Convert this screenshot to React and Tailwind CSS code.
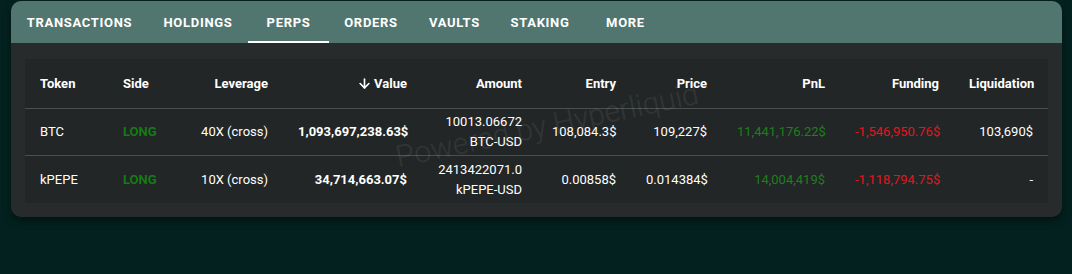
import React from 'react';
import { ArrowDown } from 'lucide-react';

const tabs = [
    { label: 'TRANSACTIONS', w: 'w-[137px]' },
    { label: 'HOLDINGS', w: 'w-[100px]' },
    { label: 'PERPS', w: 'w-[81px]', active: true },
    { label: 'ORDERS', w: 'w-[84px]' },
    { label: 'VAULTS', w: 'w-[83px]' },
    { label: 'STAKING', w: 'w-[88px]' },
    { label: 'MORE', w: 'w-[83px]' },
];

const rows = [
    {
        token: 'BTC', side: 'LONG', leverage: '40X (cross)', value: '1,093,697,238.63$',
        amount: '10013.06672', pair: 'BTC-USD', entry: '108,084.3$', price: '109,227$',
        pnl: '11,441,176.22$', funding: '-1,546,950.76$', liq: '103,690$',
    },
    {
        token: 'kPEPE', side: 'LONG', leverage: '10X (cross)', value: '34,714,663.07$',
        amount: '2413422071.0', pair: 'kPEPE-USD', entry: '0.00858$', price: '0.014384$',
        pnl: '14,004,419$', funding: '-1,118,794.75$', liq: '-',
    },
];

// colonnes: largeurs mesurées sur la capture
const cols = 'grid grid-cols-[83px_75px_100px_139px_115px_94px_91px_118px_114px_94px]';

export default function App() {
    return (
        <div className="min-h-[274px] bg-[#03221f] pt-[1px] px-[11px] font-['Roboto','Liberation_Sans',sans-serif] text-[13px]">
            <div className="w-[1051px] rounded-[10px] bg-[#272b2b] overflow-hidden shadow-[0_4px_10px_rgba(0,0,0,0.45)]">

                {/* barre d'onglets */}
                <div className="flex h-[42px] bg-[#50766f]">
                    {tabs.map((t) => (
                        <div key={t.label} className={`${t.w} relative flex items-center justify-center pt-[1px] text-white font-bold tracking-[0.7px]`}>
                            {t.label}
                            {t.active && <div className="absolute bottom-0 left-0 right-0 h-[2px] bg-white" />}
                        </div>
                    ))}
                </div>

                {/* tableau des positions */}
                <div className="px-[14px] pt-[16px] pb-[14px]">
                    <div className="relative bg-[#222626] text-white whitespace-nowrap">
                        <div className={`${cols} h-[50px] items-center border-b border-[#4a4f4f] font-bold`}>
                            <div className="px-[15px]">Token</div>
                            <div className="px-[15px]">Side</div>
                            <div className="px-[15px] text-right">Leverage</div>
                            <div className="px-[15px] flex items-center justify-end gap-[2px]">
                                <ArrowDown size={15} strokeWidth={2.6} />
                                <span>Value</span>
                            </div>
                            <div className="px-[15px] text-right">Amount</div>
                            <div className="px-[15px] text-right">Entry</div>
                            <div className="px-[15px] text-right">Price</div>
                            <div className="px-[15px] text-right">PnL</div>
                            <div className="px-[15px] text-right">Funding</div>
                            <div className="px-[15px] text-right">Liquidation</div>
                        </div>

                        {rows.map((r, i) => (
                            <div key={r.token} className={`${cols} h-[47px] items-center ${i === 0 ? 'border-b border-[#4a4f4f]' : ''}`}>
                                <div className="px-[15px]">{r.token}</div>
                                <div className="px-[15px] font-bold text-[#157a15]">{r.side}</div>
                                <div className="px-[15px] text-right">{r.leverage}</div>
                                <div className="px-[15px] text-right font-bold">{r.value}</div>
                                <div className="px-[15px] text-right leading-[20px]">
                                    <div>{r.amount}</div>
                                    <div>{r.pair}</div>
                                </div>
                                <div className="px-[15px] text-right">{r.entry}</div>
                                <div className="px-[15px] text-right">{r.price}</div>
                                <div className="px-[15px] text-right text-[#1e7f1e]">{r.pnl}</div>
                                <div className="px-[15px] text-right text-[#e0161e]">{r.funding}</div>
                                <div className="px-[15px] text-right">{r.liq}</div>
                            </div>
                        ))}

                        {/* filigrane */}
                        <div className="pointer-events-none absolute left-[51%] top-[46%] -translate-x-1/2 -translate-y-1/2 -rotate-[12deg] text-[30px] font-light text-white/[0.07]">
                            Powered by Hyperliquid
                        </div>
                    </div>
                </div>
            </div>
        </div>
    );
}
